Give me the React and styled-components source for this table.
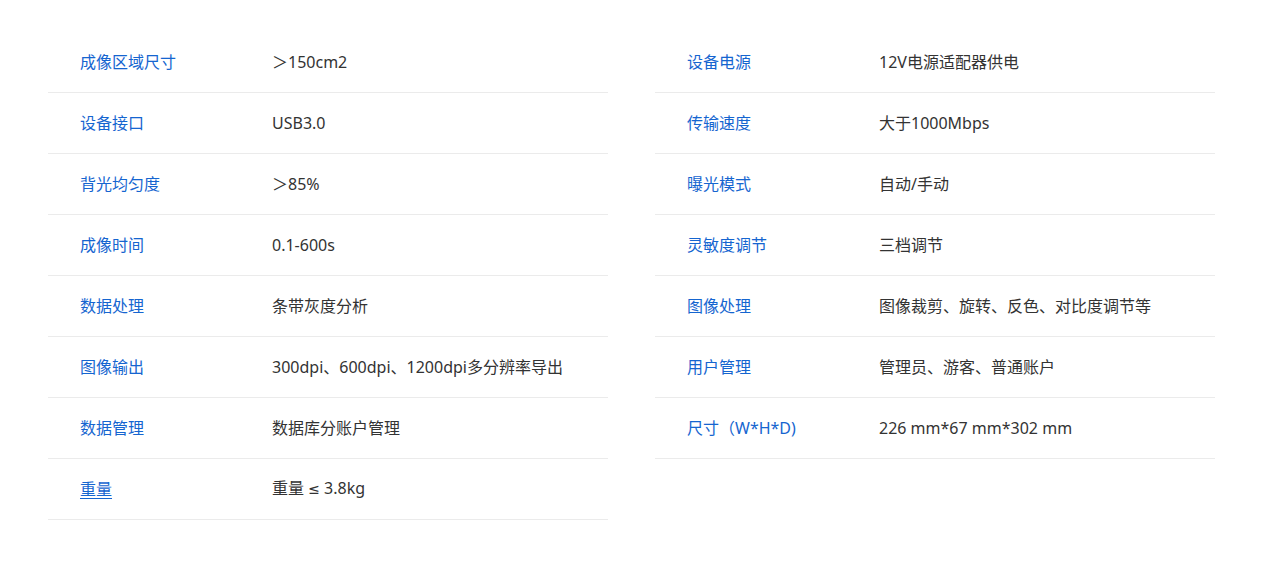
import React from 'react';
import styled, { createGlobalStyle } from 'styled-components';

const GlobalStyle = createGlobalStyle`
  body {
    margin: 0;
    background: #fff;
    font-family: "Noto Sans", "Noto Sans CJK SC", sans-serif;
  }
`;

const Page = styled.div`
  display: grid;
  grid-template-columns: 560px 560px;
  column-gap: 47px;
  padding: 32px 48px;
  align-items: start;
`;

const Table = styled.div`
  display: flex;
  flex-direction: column;
`;

const Row = styled.div`
  display: flex;
  align-items: center;
  height: 61px;
  padding-bottom: 1px;
  box-sizing: border-box;
  border-bottom: 1px solid #ebebeb;
  font-size: 16px;
  line-height: 22px;
`;

const Label = styled.div`
  width: 224px;
  padding-left: 32px;
  box-sizing: border-box;
  flex-shrink: 0;
  color: #1565d0;
  text-decoration: ${p => (p.$active ? 'underline' : 'none')};
  text-underline-offset: 3px;
`;

const Value = styled.div`
  flex: 1;
  color: #333;
`;

const Sym = styled.span`
  font-family: "DejaVu Sans", sans-serif;
  font-size: 14px;
`;

const left = [
  ['成像区域尺寸', '＞150cm2'],
  ['设备接口', 'USB3.0'],
  ['背光均匀度', '＞85%'],
  ['成像时间', '0.1-600s'],
  ['数据处理', '条带灰度分析'],
  ['图像输出', '300dpi、600dpi、1200dpi多分辨率导出'],
  ['数据管理', '数据库分账户管理'],
  ['重量', <>重量 <Sym>≤</Sym> 3.8kg</>, true],
];

const right = [
  ['设备电源', '12V电源适配器供电'],
  ['传输速度', '大于1000Mbps'],
  ['曝光模式', '自动/手动'],
  ['灵敏度调节', '三档调节'],
  ['图像处理', '图像裁剪、旋转、反色、对比度调节等'],
  ['用户管理', '管理员、游客、普通账户'],
  ['尺寸（W*H*D)', '226 mm*67 mm*302 mm'],
];

const SpecTable = ({ rows }) => (
  <Table>
    {rows.map(([k, v, active]) => (
      <Row key={k}>
        <Label $active={active}>{k}</Label>
        <Value>{v}</Value>
      </Row>
    ))}
  </Table>
);

export default function App() {
  return (
    <>
      <GlobalStyle />
      <Page>
        <SpecTable rows={left} />
        <SpecTable rows={right} />
      </Page>
    </>
  );
}
